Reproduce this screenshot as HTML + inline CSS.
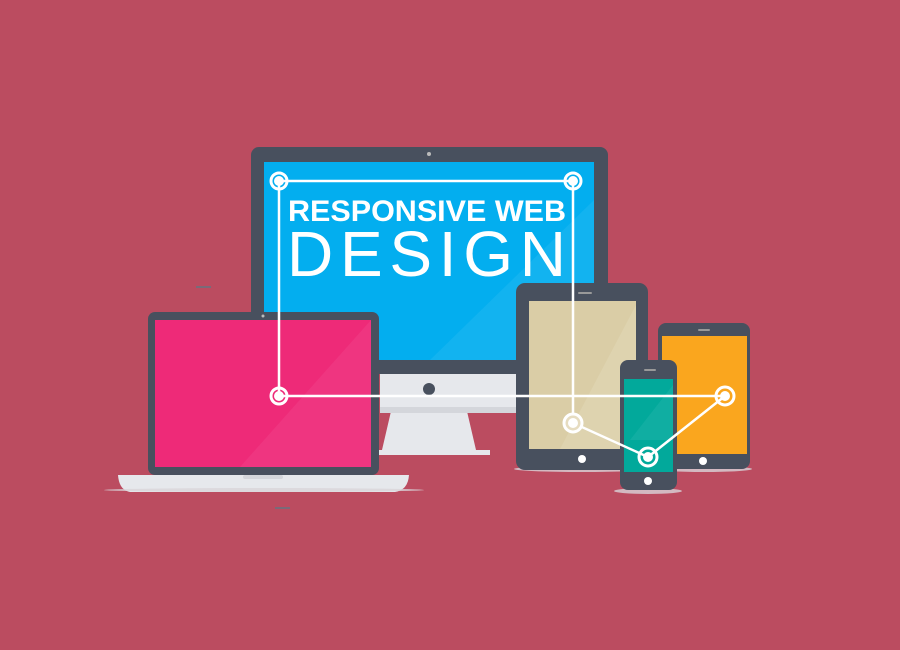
<!DOCTYPE html>
<html><head><style>html,body{margin:0;padding:0;background:#BB4C60;}svg{display:block}</style></head>
<body>
<svg width="900" height="650" viewBox="0 0 900 650" xmlns="http://www.w3.org/2000/svg">
<rect width="900" height="650" fill="#BB4C60"/>
<!-- monitor -->
<rect x="251" y="147" width="357" height="227" rx="8" fill="#48505E"/>
<rect x="264" y="162" width="330" height="198" fill="#03AEEF"/>
<polygon points="594,200 594,360 430,360" fill="#1DB6F0" opacity="0.6"/>
<circle cx="429" cy="154" r="2" fill="#bbb"/>
<rect x="380" y="374" width="136" height="33" fill="#E6E8EC"/>
<circle cx="429" cy="389" r="6" fill="#48505E"/>
<polygon points="392,407 466,407 476,450 382,450" fill="#E6E8EC"/>
<rect x="380" y="407" width="136" height="6" fill="#D4D6DB"/>
<rect x="378" y="450" width="112" height="5" fill="#E6E8EC"/>
<!-- laptop -->
<rect x="148" y="312" width="231" height="163" rx="7" fill="#48505E"/>
<rect x="155" y="320" width="216" height="147" fill="#EE2A78"/>
<polygon points="371,320 371,467 240,467" fill="#F03A83" opacity="0.7"/>
<circle cx="263" cy="316" r="1.5" fill="#bbb"/>
<path d="M118 475 H409 Q408 490 395 492 H130 Q119 490 118 475 Z" fill="#E6E8EC"/>
<rect x="243" y="475" width="40" height="4" rx="2" fill="#D4D6DB"/>
<ellipse cx="264" cy="490" rx="160" ry="2" fill="#D9D4D9" opacity="0.8"/>
<rect x="196" y="286" width="15" height="2" fill="#7a6a78"/>
<rect x="275" y="507" width="15" height="2" fill="#7a6a78"/>
<!-- tablet -->
<ellipse cx="582" cy="469" rx="68" ry="3" fill="#D9D4D9" opacity="0.8"/>
<rect x="516" y="283" width="132" height="187" rx="9" fill="#48505E"/>
<rect x="529" y="301" width="107" height="148" fill="#DACDA6"/>
<polygon points="636,305 636,449 560,449" fill="#E0D5B3" opacity="0.7"/>
<rect x="578" y="292" width="14" height="2" rx="1" fill="#999"/>
<circle cx="582" cy="459" r="4" fill="#fff"/>
<!-- orange phone -->
<ellipse cx="704" cy="469" rx="48" ry="3" fill="#D9D4D9" opacity="0.8"/>
<rect x="658" y="323" width="92" height="146" rx="8" fill="#48505E"/>
<rect x="662" y="336" width="85" height="118" fill="#FAA61E"/>
<rect x="698" y="329" width="12" height="2" rx="1" fill="#999"/>
<circle cx="703" cy="461" r="4" fill="#fff"/>
<!-- small phone -->
<ellipse cx="648" cy="491" rx="34" ry="3" fill="#D9D4D9" opacity="0.8"/>
<rect x="620" y="360" width="57" height="130" rx="8" fill="#48505E"/>
<rect x="624" y="379" width="49" height="93" fill="#02A99B"/>
<polygon points="673,385 673,440 630,440" fill="#1BB3A6" opacity="0.6"/>
<rect x="644" y="369" width="12" height="2" rx="1" fill="#999"/>
<circle cx="648" cy="481" r="4" fill="#fff"/>
<!-- text -->
<text x="288" y="221" font-family="Liberation Sans, sans-serif" font-weight="bold" font-size="30" fill="#fff" textLength="278" lengthAdjust="spacingAndGlyphs">RESPONSIVE WEB</text>
<text x="287" y="276" font-family="Liberation Sans, sans-serif" font-size="64" fill="#fff" textLength="279" lengthAdjust="spacing">DESIGN</text>
<!-- lines -->
<g stroke="#fff" stroke-width="2.5" fill="none">
<path d="M279 181 H573 M279 181 V396 H725 M573 181 V423 L648 457 L725 396"/>
</g>
<g fill="#fff" stroke="#fff">
<circle cx="279" cy="181" r="8" stroke-width="3" fill="none"/><circle cx="279" cy="181" r="5" stroke="none"/>
<circle cx="573" cy="181" r="8" stroke-width="3" fill="none"/><circle cx="573" cy="181" r="5" stroke="none"/>
<circle cx="279" cy="396" r="8" stroke-width="3" fill="none"/><circle cx="279" cy="396" r="5" stroke="none"/>
<circle cx="573" cy="423" r="9" stroke-width="3" fill="#E6DCC0"/><circle cx="573" cy="423" r="5" stroke="none"/>
<circle cx="648" cy="457" r="9" stroke-width="3" fill="none"/><circle cx="648" cy="457" r="5" stroke="none"/>
<circle cx="725" cy="396" r="9" stroke-width="3" fill="none"/><circle cx="725" cy="396" r="5" stroke="none"/>
</g>
</svg>
</body></html>
